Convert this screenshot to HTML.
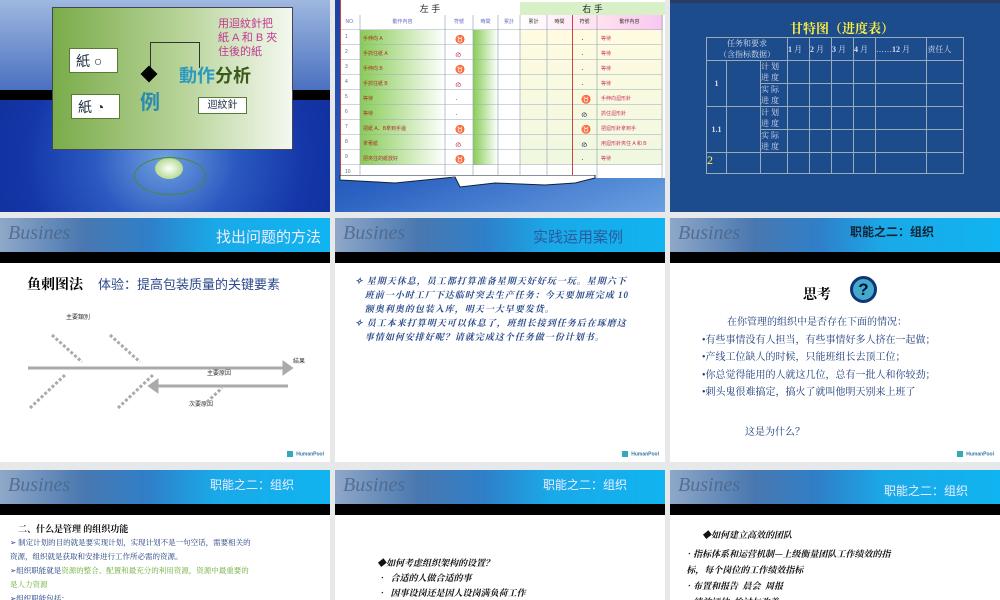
<!DOCTYPE html>
<html><head><meta charset="utf-8"><style>
*{margin:0;padding:0;box-sizing:border-box}
body{width:1000px;height:600px;background:#e6e8ea;position:relative;overflow:hidden;font-family:"Liberation Sans","Noto Sans CJK SC",sans-serif}
.s{position:absolute;overflow:hidden;background:#fff}
.hd{position:absolute;left:0;top:0;width:100%;height:34px;background:linear-gradient(90deg,#8fa8c8 0%,#4a78b0 25%,#2f7fc8 45%,#1aa9e8 65%,#10b4f0 100%)}
.bk{position:absolute;left:0;top:34px;width:100%;height:11px;background:#000}
.bz{position:absolute;left:8px;top:4px;font-family:"Liberation Serif",serif;font-style:italic;font-size:20px;color:#4a6488;opacity:.8}
.ht{position:absolute;top:8px;font-size:15px;color:#fff;font-family:"Liberation Sans","Noto Sans CJK SC",sans-serif}
.hp{position:absolute;right:6px;bottom:5px;font-size:5px;color:#37a;font-weight:bold}
.hp:before{content:"";display:inline-block;width:6px;height:6px;background:#3ab;margin-right:3px;vertical-align:middle}
.t{position:absolute;color:#2a4a8a;font-family:"Liberation Serif","Noto Serif CJK SC",serif}
table{border-collapse:collapse}
.cl{position:absolute;top:15px;font-size:5px;color:#66c;text-align:center;line-height:15px}
</style></head><body>

<!-- Slide 1 -->
<div class="s" style="left:0;top:0;width:330px;height:212px;background:radial-gradient(ellipse at 50% 75%,#6fa0e0 0%,#2a5ac0 30%,#1436a8 60%,#0d2a90 100%)">
 <div style="position:absolute;left:0;top:0;width:330px;height:90px;background:linear-gradient(180deg,#9fb8e0,#4a70c0)"></div>
 <div style="position:absolute;left:0;top:90px;width:330px;height:10px;background:#000"></div>
 <div style="position:absolute;left:52px;top:7px;width:241px;height:143px;background:linear-gradient(90deg,#7aac4a,#b9d49a 55%,#f4f8f0);border:1px solid #445"></div>
 <div style="position:absolute;left:69px;top:48px;width:49px;height:25px;background:#fff;border:1px solid #5a7a3a;font-size:14px;color:#234;padding:2px 6px">紙 ○</div>
 <div style="position:absolute;left:71px;top:94px;width:49px;height:25px;background:#fff;border:1px solid #5a7a3a;font-size:14px;color:#234;padding:2px 6px">紙 ◔</div>
 <div style="position:absolute;left:150px;top:42px;width:50px;height:26px;border:1px solid #333;border-bottom:none"></div>
 <div style="position:absolute;left:143px;top:68px;width:12px;height:12px;background:#000;transform:rotate(45deg)"></div>
 <div style="position:absolute;left:140px;top:86px;font-size:20px;font-weight:bold;color:#2a8ab0">例</div>
 <div style="position:absolute;left:179px;top:62px;font-size:18px;font-weight:bold;color:#2a9ac0">動作<span style="color:#3a5a1a">分析</span></div>
 <div style="position:absolute;left:218px;top:17px;font-size:11px;line-height:14px;color:#c03a90">用迴紋針把<br>紙 A 和 B 夾<br>住後的紙</div>
 <div style="position:absolute;left:198px;top:97px;width:49px;height:17px;background:#fff;border:1px solid #5a7a3a;font-size:10px;color:#234;text-align:center;line-height:15px">迴紋針</div>
 <div style="position:absolute;left:155px;top:158px;width:28px;height:21px;border-radius:50%;background:radial-gradient(#fff,#9c6)"></div>
 <div style="position:absolute;left:134px;top:157px;width:72px;height:38px;border-radius:50%;border:1px solid #4a8a2a"></div>
</div>

<!-- Slide 2 -->
<div class="s" style="left:335px;top:0;width:330px;height:212px;background:linear-gradient(160deg,#1e40a0,#2a60c0 60%,#6aa0e0)">
 <div style="position:absolute;left:5px;top:0;width:325px;height:178px;background:#fff"></div>
 <div style="position:absolute;left:5px;top:2px;width:180px;height:13px;font-size:9px;text-align:center;color:#222">左 手</div>
 <div style="position:absolute;left:185px;top:2px;width:145px;height:13px;background:#d8f0c8;font-size:9px;text-align:center;color:#222">右 手</div>
 <div style="position:absolute;left:25px;top:30px;width:85px;height:135px;background:linear-gradient(90deg,#8c5,#fff)"></div>
 <div style="position:absolute;left:138px;top:30px;width:25px;height:135px;background:linear-gradient(90deg,#8c5,#fff)"></div>
 <div style="position:absolute;left:185px;top:30px;width:143px;height:135px;background:linear-gradient(180deg,#fffbe0,#f0f8e0)"></div>
 <div style="position:absolute;left:185px;top:15px;width:143px;height:15px;background:linear-gradient(90deg,#fff,#fde 60%,#f8c8f0)"></div>
 <div style="position:absolute;left:5px;top:15px;width:322px;height:163px;background:repeating-linear-gradient(180deg,transparent 0,transparent 14.4px,#9ab 14.4px,#9ab 15px)"></div>
 <svg style="position:absolute;left:0;top:15px" width="330" height="163"><g stroke="#9ab" stroke-width="0.7"><line x1="25" y1="0" x2="25" y2="163"/><line x1="110" y1="0" x2="110" y2="163"/><line x1="138" y1="0" x2="138" y2="163"/><line x1="163" y1="0" x2="163" y2="163"/><line x1="185" y1="0" x2="185" y2="163"/><line x1="212" y1="0" x2="212" y2="163"/><line x1="262" y1="0" x2="262" y2="163"/><line x1="327" y1="0" x2="327" y2="163"/></g></svg>
 <div style="position:absolute;left:5px;top:0;width:1px;height:178px;background:#c44"></div>
 <div style="position:absolute;left:237px;top:15px;width:1px;height:163px;background:#c44"></div>
 <div class="cl" style="left:5px;width:20px">NO.</div><div class="cl" style="left:25px;width:85px">動作內容</div><div class="cl" style="left:110px;width:28px">符號</div><div class="cl" style="left:138px;width:25px">時間</div><div class="cl" style="left:163px;width:22px">累計</div>
 <div class="cl" style="left:185px;width:27px;color:#333">累計</div><div class="cl" style="left:212px;width:25px;color:#333">時間</div><div class="cl" style="left:237px;width:25px;color:#333">符號</div><div class="cl" style="left:262px;width:65px;color:#333">動作內容</div>
 <div style="position:absolute;left:10px;top:30px;font-size:5px;color:#666;line-height:15px">1<br>2<br>3<br>4<br>5<br>6<br>7<br>8<br>9<br>10</div>
 <div style="position:absolute;left:28px;top:32px;font-size:5px;color:#a33;line-height:15px">手伸向 A<br>手抓住紙 A<br>手伸向 B<br>手抓住紙 B<br>等待<br>等待<br>把紙 A、B拿到手邊<br>拿著紙<br>把夾住的紙放好</div>
 <div style="position:absolute;left:120px;top:32px;font-size:8px;color:#c36;line-height:15px">♉<br>ര<br>♉<br>ര<br>·<br>·<br>♉<br>ര<br>♉</div>
 <div style="position:absolute;left:246px;top:32px;font-size:8px;color:#336;line-height:15px">·<br>·<br>·<br>·<br>♉<br>ര<br>♉<br>ര<br>·</div>
 <div style="position:absolute;left:266px;top:32px;font-size:5px;color:#c36;line-height:15px">等待<br>等待<br>等待<br>等待<br>手伸向迴形針<br>抓住迴形針<br>把迴形針拿到手<br>用迴形針夾住 A 和 B<br>等待</div>
 <svg style="position:absolute;left:0;top:175px" width="330" height="20"><path d="M5 5 L60 8 L120 2 L125 12 L160 8 L210 10 L240 8 L260 3 L260 0 L5 0Z" fill="#fff" stroke="#123" stroke-width="1"/></svg>
</div>

<!-- Slide 3 -->
<div class="s" style="left:670px;top:0;width:330px;height:212px;background:#1d4c8c">
 <div style="position:absolute;left:0;top:0;width:330px;height:3px;background:#2a3a60"></div>
 <div style="position:absolute;left:120px;top:18px;font-size:13px;font-weight:bold;color:#ffef40;font-family:'Noto Serif CJK SC',serif">甘特图（进度表）</div>
 <table style="position:absolute;left:36px;top:37px;width:258px;height:133px;font-size:8px;color:#dde;font-family:'Liberation Serif','Noto Serif CJK SC',serif;border:1px solid #9ab">
 <tr style="height:23px"><td colspan="3" style="border:1px solid #9ab;text-align:center">任务和要求<br>（含指标数据）</td><td style="border:1px solid #9ab"><b>1</b> 月</td><td style="border:1px solid #9ab"><b>2</b> 月</td><td style="border:1px solid #9ab"><b>3</b> 月</td><td style="border:1px solid #9ab"><b>4</b> 月</td><td style="border:1px solid #9ab">……<b>12</b> 月</td><td style="border:1px solid #9ab">责任人</td></tr>
 <tr><td rowspan="2" style="border:1px solid #9ab;text-align:center;width:20px"><b>1</b></td><td rowspan="2" style="border:1px solid #9ab;width:34px"></td><td style="border:1px solid #9ab;width:27px">计 划<br>进 度</td><td style="border:1px solid #9ab"></td><td style="border:1px solid #9ab"></td><td style="border:1px solid #9ab"></td><td style="border:1px solid #9ab"></td><td style="border:1px solid #9ab"></td><td style="border:1px solid #9ab"></td></tr>
 <tr><td style="border:1px solid #9ab">实 际<br>进 度</td><td style="border:1px solid #9ab"></td><td style="border:1px solid #9ab"></td><td style="border:1px solid #9ab"></td><td style="border:1px solid #9ab"></td><td style="border:1px solid #9ab"></td><td style="border:1px solid #9ab"></td></tr>
 <tr><td rowspan="2" style="border:1px solid #9ab;text-align:center"><b>1.1</b></td><td rowspan="2" style="border:1px solid #9ab"></td><td style="border:1px solid #9ab">计 划<br>进 度</td><td style="border:1px solid #9ab"></td><td style="border:1px solid #9ab"></td><td style="border:1px solid #9ab"></td><td style="border:1px solid #9ab"></td><td style="border:1px solid #9ab"></td><td style="border:1px solid #9ab"></td></tr>
 <tr><td style="border:1px solid #9ab">实 际<br>进 度</td><td style="border:1px solid #9ab"></td><td style="border:1px solid #9ab"></td><td style="border:1px solid #9ab"></td><td style="border:1px solid #9ab"></td><td style="border:1px solid #9ab"></td><td style="border:1px solid #9ab"></td></tr>
 <tr style="height:21px"><td style="border:1px solid #9ab;font-size:12px;color:#ffef60;vertical-align:top">2</td><td style="border:1px solid #9ab"></td><td style="border:1px solid #9ab"></td><td style="border:1px solid #9ab"></td><td style="border:1px solid #9ab"></td><td style="border:1px solid #9ab"></td><td style="border:1px solid #9ab"></td><td style="border:1px solid #9ab"></td><td style="border:1px solid #9ab"></td></tr>
 </table>
</div>

<!-- Row 2 -->
<div class="s" style="left:0;top:218px;width:330px;height:244px">
 <div class="hd"></div><div class="bk"></div><div class="bz">Busines</div>
 <div class="ht" style="right:9px;color:#eef">找出问题的方法</div>
 <div style="position:absolute;left:27px;top:56px;font-size:14px;font-weight:bold;color:#000;font-family:'Noto Serif CJK SC',serif">鱼刺图法</div>
 <div style="position:absolute;left:98px;top:56px;font-size:13px;color:#2a4a8a">体验：提高包装质量的关键要素</div>
 <div style="position:absolute;left:66px;top:94px;font-size:6px;color:#333">主要類別</div>
 <div style="position:absolute;left:293px;top:138px;font-size:6px;color:#333">結果</div>
 <div style="position:absolute;left:207px;top:150px;font-size:6px;color:#333">主要原因</div>
 <div style="position:absolute;left:189px;top:181px;font-size:6px;color:#333">次要原因</div>
 <svg style="position:absolute;left:0;top:0" width="330" height="244">
  <g stroke="#aaa" stroke-width="3" fill="#aaa">
  <line x1="28" y1="150" x2="284" y2="150"/><path d="M284 145 L291 150 L284 155Z"/>
  <line x1="288" y1="168" x2="155" y2="168"/><path d="M157 163 L150 168 L157 173Z"/>
  </g>
  <g stroke="#aaa" stroke-width="3" stroke-dasharray="3,2">
  <line x1="52" y1="117" x2="82" y2="144"/><line x1="110" y1="117" x2="140" y2="144"/>
  <line x1="30" y1="190" x2="66" y2="156"/><line x1="118" y1="190" x2="154" y2="156"/>
  <line x1="207" y1="184" x2="222" y2="170"/>
  </g>
 </svg>
 <div class="hp">HumanPool</div>
</div>

<div class="s" style="left:335px;top:218px;width:330px;height:244px">
 <div class="hd"></div><div class="bk"></div><div class="bz">Busines</div>
 <div class="ht" style="left:198px;color:#2a5aa0">实践运用案例</div>
 <div class="t" style="left:20px;top:56px;width:300px;font-size:9px;line-height:14px;font-style:italic;font-weight:bold;letter-spacing:1px">✧ 星期天休息，员工都打算准备星期天好好玩一玩。星期六下<br>&nbsp;&nbsp;&nbsp;班前一小时工厂下达临时突去生产任务：今天要加班完成 10<br>&nbsp;&nbsp;&nbsp;额奥利奥的包装入库，明天一大早要发货。<br>✧ 员工本来打算明天可以休息了，班组长接到任务后在琢磨这<br>&nbsp;&nbsp;&nbsp;事情如何安排好呢？请就完成这个任务做一份计划书。</div>
 <div class="hp">HumanPool</div>
</div>

<div class="s" style="left:670px;top:218px;width:330px;height:244px">
 <div class="hd"></div><div class="bk"></div><div class="bz">Busines</div>
 <div class="ht" style="left:180px;top:5px;color:#123;font-size:12px;font-weight:bold">职能之二：组织</div>
 <div style="position:absolute;left:133px;top:66px;font-size:14px;font-weight:bold;color:#000;font-family:'Noto Serif CJK SC',serif">思考</div>
 <div style="position:absolute;left:180px;top:58px;width:27px;height:27px;border-radius:50%;border:3px solid #137;background:#4ac;color:#013;font-size:17px;font-weight:bold;text-align:center;line-height:21px">?</div>
 <div class="t" style="left:32px;top:96px;font-size:10px;line-height:17.5px;color:#1a3a7a">&nbsp;&nbsp;&nbsp;&nbsp;&nbsp;&nbsp;&nbsp;&nbsp;&nbsp;&nbsp;在你管理的组织中是否存在下面的情况：<br>•有些事情没有人担当，有些事情好多人挤在一起做；<br>•产线工位缺人的时候，只能班组长去顶工位；<br>•你总觉得能用的人就这几位，总有一批人和你较劲；<br>•刺头鬼很难搞定，搞火了就叫他明天别来上班了</div>
 <div class="t" style="left:75px;top:205px;font-size:10px;color:#1a3a7a">这是为什么？</div>
 <div class="hp">HumanPool</div>
</div>

<!-- Row 3 -->
<div class="s" style="left:0;top:470px;width:330px;height:130px">
 <div class="hd"></div><div class="bk"></div><div class="bz">Busines</div>
 <div class="ht" style="left:210px;top:6px;font-size:12px;color:#eef">职能之二：组织</div>
 <div style="position:absolute;left:18px;top:52px;font-size:9px;font-weight:bold;color:#111;font-family:'Noto Serif CJK SC',serif">二、什么是管理 的组织功能</div>
 <div class="t" style="left:10px;top:66px;width:315px;font-size:7.5px;line-height:14px;color:#1a3a7a">➢ 制定计划的目的就是要实现计划，实现计划不是一句空话，需要相关的<br>资源，组织就是获取和安排进行工作所必需的资源。<br>➢组织职能就是<span style="color:#6a3">资源的整合、配置和最充分的利用资源，资源中最重要的<br>是人力资源</span><br>➢组织职能包括：</div>
</div>

<div class="s" style="left:335px;top:470px;width:330px;height:130px">
 <div class="hd"></div><div class="bk"></div><div class="bz">Busines</div>
 <div class="ht" style="left:208px;top:6px;font-size:12px;color:#eef">职能之二：组织</div>
 <div style="position:absolute;left:42px;top:85px;font-size:9px;line-height:15px;color:#111;font-family:'Noto Serif CJK SC',serif;font-style:italic;font-weight:bold">◆如何考虑组织架构的设置？<br>•&nbsp; 合适的人做合适的事<br>•&nbsp; 因事设岗还是因人设岗满负荷工作</div>
</div>

<div class="s" style="left:670px;top:470px;width:330px;height:130px">
 <div class="hd"></div><div class="bk"></div><div class="bz">Busines</div>
 <div class="ht" style="left:214px;top:12px;font-size:12px;color:#eef">职能之二：组织</div>
 <div style="position:absolute;left:32px;top:58px;font-size:9px;color:#111;font-family:'Noto Serif CJK SC',serif;font-style:italic;font-weight:bold">◆如何建立高效的团队</div>
 <div style="position:absolute;left:14px;top:76px;width:310px;font-size:9px;line-height:16px;color:#111;font-family:'Noto Serif CJK SC',serif;font-style:italic;font-weight:bold">•指标体系和运营机制—上级衡量团队工作绩效的指<br>&nbsp;标，每个岗位的工作绩效指标<br>•布置和报告&nbsp;&nbsp;晨会&nbsp;&nbsp;周报<br>•绩效评估&nbsp;&nbsp;检讨与改善</div>
</div>
</body></html>
